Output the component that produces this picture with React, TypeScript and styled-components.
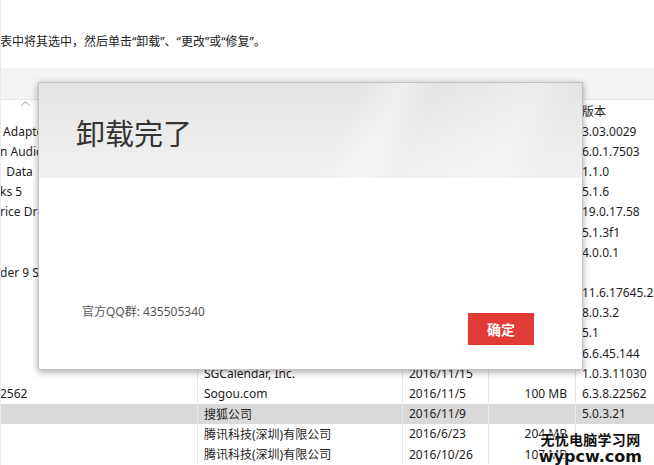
import styled, { createGlobalStyle } from 'styled-components';

const GlobalStyle = createGlobalStyle`
  html, body {
    margin: 0;
    padding: 0;
    background: #ffffff;
  }
  body {
    font-family: "Noto Sans", "Noto Sans CJK SC", sans-serif;
    color: #1e1e1e;
  }
`;

const Page = styled.div`
  position: relative;
  width: 654px;
  height: 465px;
  overflow: hidden;
  background: #fff;
  border-left: 1px solid #ececec;
  box-sizing: border-box;
`;

const Hint = styled.div`
  height: 68px;
  padding-top: 33px;
  box-sizing: border-box;
  font-size: 12px;
  line-height: 18px;
  white-space: nowrap;
  margin-left: -1px;
  color: #222;
`;

const Band = styled.div`
  height: 31px;
  background: #f3f4f6;
  border-bottom: 1px solid #e6e6e6;
`;

const Table = styled.div`
  display: flex;
  flex-direction: column;
  margin-left: -1px;
`;

const Row = styled.div<{ $selected?: boolean; $head?: boolean }>`
  display: grid;
  grid-template-columns: 197px 205px 86px 87px 1fr;
  height: ${({ $head }) => ($head ? '21px' : '20.2px')};
  background: ${({ $selected }) => ($selected ? '#d9d9d9' : 'transparent')};
  font-size: 12px;
  align-items: center;
  white-space: nowrap;
`;

const Cell = styled.div<{ $right?: boolean; $first?: boolean }>`
  height: 100%;
  display: flex;
  align-items: center;
  justify-content: ${({ $right }) => ($right ? 'flex-end' : 'flex-start')};
  padding: ${({ $first, $right }) => ($first ? '0' : $right ? '0 8px 0 0' : '0 0 0 6px')};
  border-left: ${({ $first }) => ($first ? 'none' : '1px solid #e8e8e8')};
  overflow: hidden;
  box-sizing: border-box;
`;

const HeadCell = styled(Cell)`
  align-items: flex-start;
`;

const Caret = styled.svg`
  margin: 1px 0 0 21px;
`;

const Label = styled.span`
  align-self: center;
`;

const Dialog = styled.div`
  position: absolute;
  left: 37px;
  top: 82px;
  width: 545px;
  height: 288px;
  background: #fff;
  border: 1px solid #c4c4c4;
  box-shadow: 0 2px 7px rgba(0, 0, 0, 0.35);
  box-sizing: border-box;
  display: flex;
  flex-direction: column;
`;

const DialogHead = styled.div`
  height: 95px;
  background:
    linear-gradient(115deg, rgba(255,255,255,0) 55%, rgba(255,255,255,0.35) 62%, rgba(255,255,255,0) 68%, rgba(255,255,255,0.3) 85%, rgba(255,255,255,0) 92%),
    linear-gradient(180deg, #e4e4e4 0%, #ececec 60%, #f0f0f0 100%);
  padding: 30px 0 0 37px;
  box-sizing: border-box;
`;

const Title = styled.h1`
  margin: 0;
  font-family: "Noto Sans CJK SC", sans-serif;
  font-weight: 400;
  font-size: 29px;
  line-height: 38px;
  color: #333;
`;

const DialogBody = styled.div`
  flex: 1;
  display: flex;
  flex-direction: column;
  justify-content: flex-end;
  padding: 0 48px 24px 43px;
`;

const Footer = styled.div`
  display: flex;
  justify-content: space-between;
  align-items: flex-start;
`;

const Note = styled.span`
  font-size: 12px;
  line-height: 16px;
  color: #555;
`;

const OkButton = styled.button`
  margin-top: 9px;
  width: 66px;
  height: 32px;
  border: none;
  background: #e23a36;
  color: #fff;
  font-family: "Noto Sans CJK SC", sans-serif;
  font-weight: 700;
  font-size: 14px;
  cursor: pointer;
`;

const Watermark = styled.div`
  position: absolute;
  right: 12px;
  bottom: 0;
  display: flex;
  flex-direction: column;
  align-items: center;
  white-space: nowrap;
  font-weight: 700;
  color: #111;
  text-shadow: 0 0 2px #fff, 0 0 2px #fff, 0 0 3px #fff;
  line-height: 1;
`;

const MarkCn = styled.span`
  font-family: "Noto Sans CJK SC", sans-serif;
  font-size: 14px;
  line-height: 18px;
  letter-spacing: 0.3px;
`;

const MarkEn = styled.span`
  font-family: "DejaVu Sans", sans-serif;
  font-size: 16px;
  line-height: 17px;
`;

type Entry = [string, string, string, string, string];

const rows: Entry[] = [
  [' Adapter', '', '', '', '3.03.0029'],
  ['n Audio', '', '', '', '6.0.1.7503'],
  ['  Data', '', '', '', '1.1.0'],
  ['ks 5', '', '', '', '5.1.6'],
  ['rice Driver', '', '', '', '19.0.17.58'],
  ['', '', '', '', '5.1.3f1'],
  ['', '', '', '', '4.0.0.1'],
  ['der 9 SE', '', '', '', ''],
  ['', '', '', '', '11.6.17645.22'],
  ['', '', '', '', '8.0.3.2'],
  ['', '', '', '', '5.1'],
  ['', '', '', '', '6.6.45.144'],
  ['', 'SGCalendar, Inc.', '2016/11/15', '', '1.0.3.11030'],
  ['2562', 'Sogou.com', '2016/11/5', '100 MB', '6.3.8.22562'],
  ['', '搜狐公司', '2016/11/9', '', '5.0.3.21'],
  ['', '腾讯科技(深圳)有限公司', '2016/6/23', '204 MB', ''],
  ['', '腾讯科技(深圳)有限公司', '2016/10/26', '107 MB', ''],
];

export default function App() {
  return (
    <Page>
      <GlobalStyle />
      <Hint>表中将其选中，然后单击“卸载”、“更改”或“修复”。</Hint>
      <Band />
      <Table>
        <Row $head>
          <HeadCell $first>
            <Caret width="9" height="5" viewBox="0 0 9 5">
              <path d="M0.5 4.5 L4.5 0.8 L8.5 4.5" fill="none" stroke="#9a9a9a" strokeWidth="1" />
            </Caret>
          </HeadCell>
          <Cell />
          <Cell />
          <Cell />
          <HeadCell>
            <Label>版本</Label>
          </HeadCell>
        </Row>
        {rows.map((r, i) => (
          <Row key={i} $selected={i === 14}>
            <Cell $first style={{ whiteSpace: 'pre' }}>{r[0]}</Cell>
            <Cell>{r[1]}</Cell>
            <Cell>{r[2]}</Cell>
            <Cell $right>{r[3]}</Cell>
            <Cell>{r[4]}</Cell>
          </Row>
        ))}
      </Table>

      <Dialog>
        <DialogHead>
          <Title>卸载完了</Title>
        </DialogHead>
        <DialogBody>
          <Footer>
            <Note>官方QQ群: 435505340</Note>
            <OkButton>确定</OkButton>
          </Footer>
        </DialogBody>
      </Dialog>

      <Watermark>
        <MarkCn>无忧电脑学习网</MarkCn>
        <MarkEn>wypcw.com</MarkEn>
      </Watermark>
    </Page>
  );
}
